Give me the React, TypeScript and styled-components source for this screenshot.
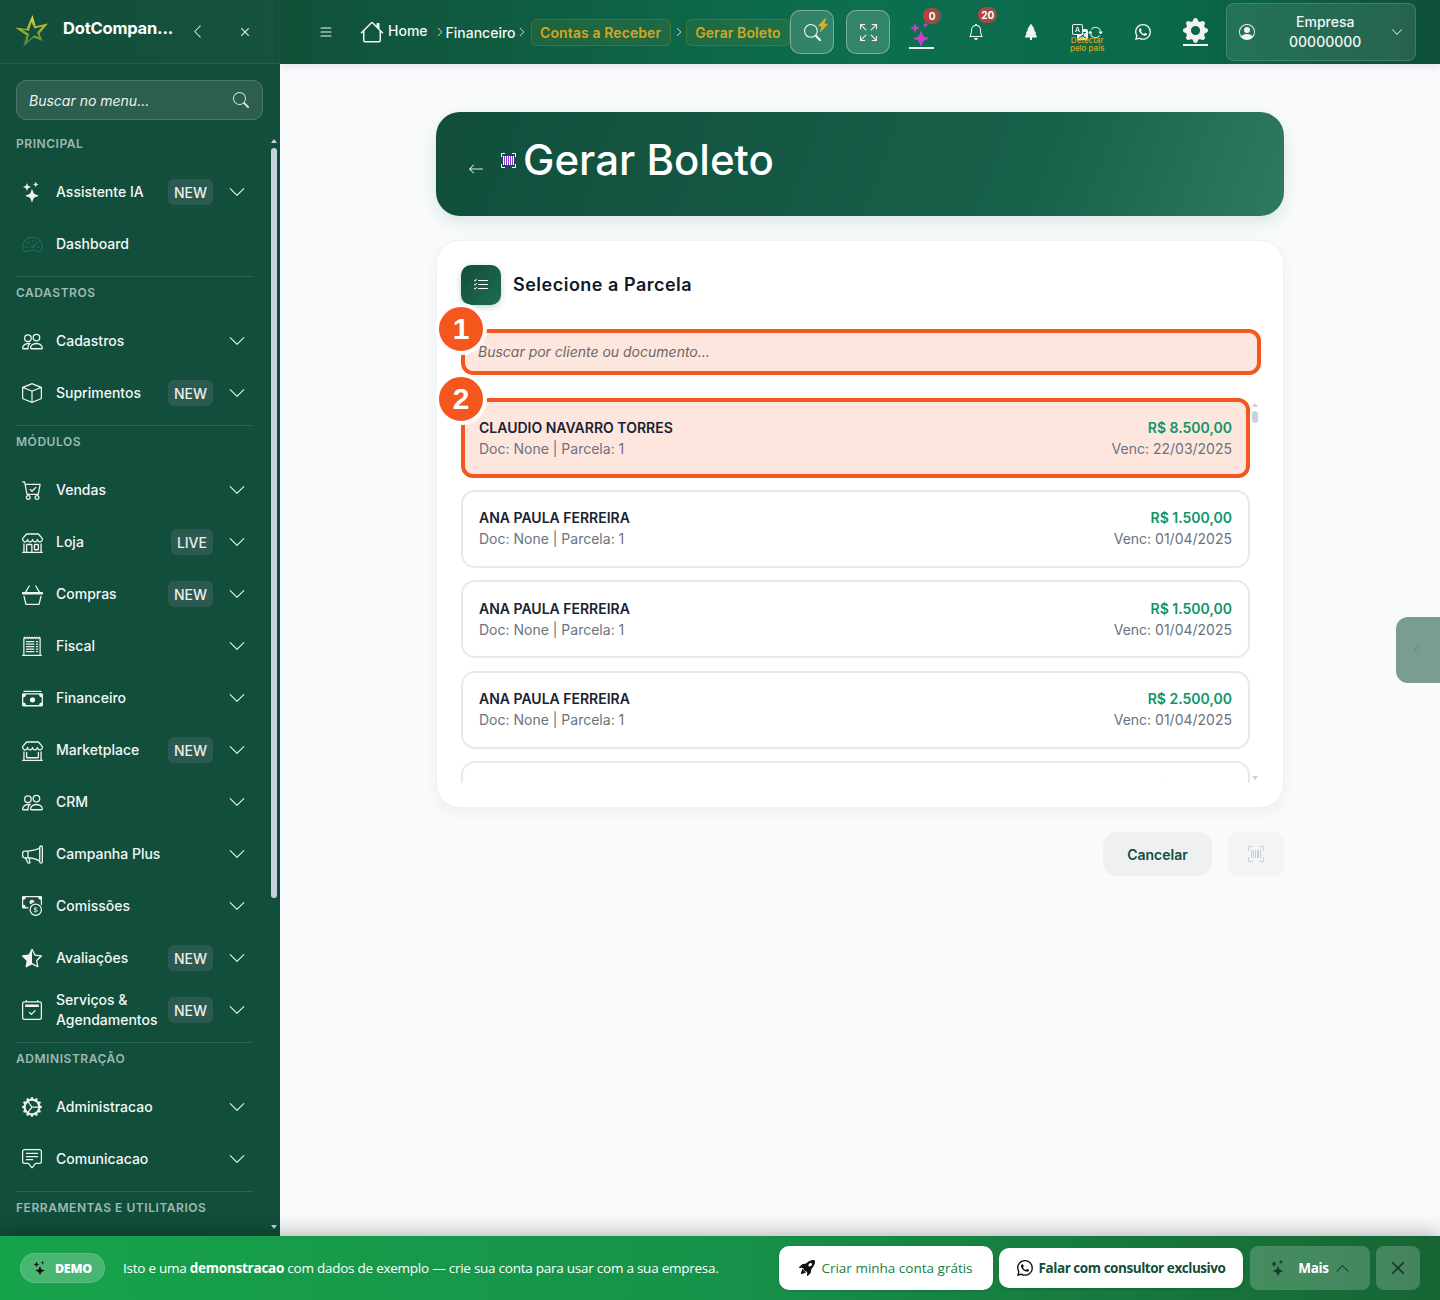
import React from "react";
import styled, { createGlobalStyle } from "styled-components";
import {
  BsArrowLeft,
  BsArrowRepeat,
  BsArrowsFullscreen,
  BsBasket3,
  BsBell,
  BsBox,
  BsCalendar2Check,
  BsCartCheck,
  BsCashCoin,
  BsCashStack,
  BsChatSquareText,
  BsChevronDown,
  BsChevronLeft,
  BsChevronRight,
  BsChevronUp,
  BsGearFill,
  BsGearWideConnected,
  BsHouse,
  BsLightningChargeFill,
  BsList,
  BsListCheck,
  BsMegaphone,
  BsPeople,
  BsPersonCircle,
  BsReceiptCutoff,
  BsRocketTakeoffFill,
  BsSearch,
  BsShop,
  BsShopWindow,
  BsSpeedometer2,
  BsStarHalf,
  BsStars,
  BsTranslate,
  BsTreeFill,
  BsUpcScan,
  BsWhatsapp,
  BsX,
} from "react-icons/bs";

const GlobalStyle = createGlobalStyle`
  html, body {
    margin: 0;
    padding: 0;
    background: #f8fafc;
  }
  body {
    font-family: "Inter", "Liberation Sans", sans-serif;
  }
  * {
    box-sizing: border-box;
  }
`;

const Page = styled.div`
  position: relative;
  width: 1440px;
  height: 1300px;
  display: grid;
  grid-template-rows: 1236px 64px;
  overflow: hidden;
`;

const Shell = styled.div`
  display: grid;
  grid-template-columns: 280px 1fr;
  min-height: 0;
`;

/* sidebar */

const Sidebar = styled.aside`
  position: relative;
  background: #114e3c;
  display: flex;
  flex-direction: column;
  min-height: 0;
  overflow: hidden;
`;

const Brand = styled.div`
  height: 64px;
  flex: none;
  display: flex;
  align-items: center;
  padding: 0 0 0 14px;
  border-bottom: 1px solid rgba(255, 255, 255, 0.08);
  border-right: 1px solid rgba(255, 255, 255, 0.06);
  background: linear-gradient(90deg, #114e3c, #15533d);
  color: #fff;
`;

const BrandName = styled.div`
  width: 116px;
  margin: -8px 0 0 13px;
  font-size: 16.5px;
  font-weight: 700;
  letter-spacing: -0.2px;
  white-space: nowrap;
`;

const BrandClose = styled.div`
  display: flex;
  align-items: center;
  margin-left: 11px;
  gap: 31px;
  color: #e4ece9;
`;

const MenuSearch = styled.div`
  height: 40px;
  margin: 16px 17px 0 16px;
  padding: 0 13px 0 12px;
  flex: none;
  display: flex;
  align-items: center;
  justify-content: space-between;
  background: #2d5f50;
  border: 1px solid #4a7769;
  border-radius: 10px;
  color: #eef3f1;
  font-size: 14px;
  font-style: italic;

  svg {
    color: #d4dfdc;
  }
`;

const Nav = styled.nav`
  padding: 14px 27px 0 16px;
  flex: 1;
  overflow: hidden;
`;

const Group = styled.section`
  & + & {
    margin-top: 6px;
    padding-top: 6px;
    border-top: 1px solid rgba(255, 255, 255, 0.12);
  }
`;

const GroupLabel = styled.div`
  height: 20px;
  margin-bottom: 12px;
  font-size: 12px;
  font-weight: 600;
  line-height: 20px;
  letter-spacing: 0.55px;
  color: #9fbab1;
`;

const Row = styled.div`
  height: 52px;
  display: flex;
  align-items: center;
  padding: 0 8px 0 5px;
  color: #f4f7f6;
`;

const RowIcon = styled.span<{ $dim?: boolean }>`
  width: 22px;
  height: 22px;
  flex: none;
  display: flex;
  align-items: center;
  justify-content: center;
  color: ${(p) => (p.$dim ? "#1d6a54" : "#eef3f1")};
`;

const RowText = styled.span`
  flex: 1;
  margin-left: 13px;
  font-size: 14px;
  font-weight: 500;
  line-height: 20px;
`;

const Badge = styled.span`
  height: 26px;
  margin-right: 15px;
  padding: 0 6px;
  display: flex;
  align-items: center;
  border-radius: 6px;
  background: #2d5a50;
  font-size: 14px;
  font-weight: 500;
  color: #e9efed;
`;

const RowChevron = styled.span`
  width: 18px;
  margin-right: -1px;
  display: flex;
  justify-content: center;
  color: #e8eeec;
`;

const Rail = styled.div`
  position: absolute;
  top: 139px;
  bottom: 0;
  right: 3px;
  width: 6px;
`;

const RailThumb = styled.div`
  margin-top: 9px;
  height: 750px;
  border-radius: 3px;
  background: #c5d2de;
`;

const RailArrow = styled.div<{ $down?: boolean }>`
  position: absolute;
  left: 0;
  ${(p) => (p.$down ? "bottom: 7px;" : "top: 0;")}
  width: 0;
  height: 0;
  border-left: 3px solid transparent;
  border-right: 3px solid transparent;
  ${(p) =>
    p.$down
      ? "border-top: 4px solid #c5d2de;"
      : "border-bottom: 4px solid #c5d2de;"}
`;

/* top bar */

const Content = styled.div`
  display: grid;
  grid-template-rows: 64px 1fr;
  min-height: 0;
`;

const TopBar = styled.header`
  position: relative;
  z-index: 1;
  display: flex;
  align-items: center;
  padding-left: 38px;
  background: linear-gradient(90deg, #115038 0%, #0c6f50 50%, #0a6a4b 75%, #0f5039 100%);
  box-shadow: 0 2px 8px rgba(15, 23, 42, 0.1);
  color: #f2f6f4;
`;

const Crumbs = styled.div`
  display: flex;
  align-items: center;
  margin-left: 26px;
  font-size: 14px;
  font-weight: 500;
  white-space: nowrap;
`;

const HomeText = styled.span`
  margin: -4px 6px 0 4px;
`;

const Sep = styled.span<{ $ml?: number; $mr?: number }>`
  display: flex;
  margin: 0 ${(p) => p.$mr ?? 1}px 0 ${(p) => p.$ml ?? 1}px;
  color: #dfe9e5;
`;

const CrumbPill = styled.span`
  height: 27px;
  padding: 0 8.5px;
  display: flex;
  align-items: center;
  border: 1px solid rgba(234, 179, 8, 0.18);
  border-radius: 6px;
  background: rgba(234, 179, 8, 0.07);
  color: #d9a51f;
  font-weight: 600;
  letter-spacing: 0.1px;
`;

const ToolButton = styled.button<{ $gap?: number }>`
  position: relative;
  width: 44px;
  height: 44px;
  margin-left: ${(p) => p.$gap ?? 0}px;
  padding: 0;
  display: flex;
  align-items: center;
  justify-content: center;
  border: 1px solid rgba(255, 255, 255, 0.35);
  border-radius: 10px;
  background: rgba(255, 255, 255, 0.16);
  color: #f2f6f4;
`;

const Bolt = styled.span`
  position: absolute;
  top: 7px;
  right: 3px;
  display: flex;
  color: #e8ad1d;
`;

const TopIcon = styled.div<{ $gap: number; $w?: number }>`
  position: relative;
  width: ${(p) => p.$w ?? 32}px;
  margin-left: ${(p) => p.$gap}px;
  display: flex;
  align-items: center;
  justify-content: center;
  color: #f0f5f3;
`;

const SparkStack = styled.div`
  display: flex;
  flex-direction: column;
  align-items: center;
  margin-top: 6px;
  color: #c93fc7;
`;

const Underline = styled.div`
  width: 25px;
  height: 2px;
  margin-top: 1px;
  background: #eef3f1;
`;

const GearStack = styled(SparkStack)`
  margin-top: 0;
  color: #eef3f1;
`;

const CountDot = styled.span<{ $top: number; $left: number }>`
  position: absolute;
  top: ${(p) => p.$top}px;
  left: ${(p) => p.$left}px;
  min-width: 18px;
  height: 16px;
  padding: 0 3px;
  display: flex;
  align-items: center;
  justify-content: center;
  border-radius: 9px;
  background: linear-gradient(90deg, #c93a3a, #7d5a4b);
  font-size: 10px;
  font-weight: 700;
  color: #fff;
`;

const Detect = styled.span`
  position: absolute;
  top: 12px;
  left: 0;
  width: 100%;
  text-align: center;
  font-size: 8px;
  line-height: 8px;
  font-weight: 500;
  color: #d9a51f;
`;

const Company = styled.div`
  width: 190px;
  height: 58px;
  margin-left: 15px;
  padding: 0 12px 0 12px;
  display: flex;
  align-items: center;
  border: 1px solid rgba(255, 255, 255, 0.14);
  border-radius: 8px;
  background: rgba(255, 255, 255, 0.1);
`;

const CompanyText = styled.div`
  flex: 1;
  padding-left: 4px;
  text-align: center;
  font-size: 14px;
  font-weight: 500;
  line-height: 20.5px;
`;

/* main */

const Main = styled.main`
  position: relative;
  min-height: 0;
  padding: 48px 156px 0;
  background: #f8fafc;
  overflow: hidden;
`;

const Hero = styled.div`
  height: 104px;
  padding: 0 32px;
  display: flex;
  align-items: center;
  border-radius: 24px;
  background: linear-gradient(110deg, #114e3c 0%, #17604a 70%, #2e7a60 100%);
  box-shadow: 0 6px 16px rgba(15, 80, 60, 0.12);
  color: #fff;
`;

const HeroBack = styled.span`
  display: flex;
  margin: 10px 16px 0 0;
  color: #e2eae7;
`;

const HeroMark = styled.span`
  display: flex;
  margin: 0 6px 8px 0;
`;

const HeroTitle = styled.h1`
  margin: 0 0 8px;
  font-family: "Inter", sans-serif;
  font-size: 42px;
  font-weight: 500;
  line-height: 48px;
  letter-spacing: 0;
`;

const Card = styled.section`
  height: 568px;
  margin-top: 24px;
  padding: 24px;
  background: #fff;
  border: 1px solid #eff2f6;
  border-radius: 24px;
  box-shadow: 0 4px 14px rgba(15, 23, 42, 0.05);
`;

const CardHead = styled.div`
  display: flex;
  align-items: center;
  gap: 12px;
  color: #111827;
`;

const CardIcon = styled.span`
  width: 40px;
  height: 40px;
  display: flex;
  align-items: center;
  justify-content: center;
  border-radius: 10px;
  background: linear-gradient(135deg, #114e3c, #1f6c52);
  box-shadow: 0 2px 6px rgba(15, 80, 60, 0.25);
  color: #fff;
`;

const CardTitle = styled.h2`
  margin: 0;
  font-size: 18px;
  font-weight: 600;
  line-height: 28px;
  letter-spacing: 0.5px;
`;

const SearchField = styled.div`
  position: relative;
  height: 38px;
  margin: 28px 4px 0 4px;
  padding-left: 13px;
  display: flex;
  align-items: center;
  width: 792px;
  font-size: 14px;
  font-style: italic;
  color: #6b6663;
`;

const Highlight = styled.div`
  position: absolute;
  inset: -4px;
  border: 4px solid #f4561d;
  border-radius: 12px;
  background: rgba(244, 86, 29, 0.15);
`;

const ItemHighlight = styled(Highlight)`
  inset: -3px -2px;
`;

const StepBadge = styled.div<{ $item?: boolean }>`
  position: absolute;
  z-index: 2;
  top: ${(p) => (p.$item ? -28.5 : -30)}px;
  left: ${(p) => (p.$item ? -28 : -30)}px;
  width: 52px;
  height: 52px;
  display: flex;
  align-items: center;
  justify-content: center;
  border: 4px solid #fff;
  border-radius: 50%;
  background: #f4561d;
  font-family: "Liberation Sans", sans-serif;
  font-size: 30px;
  font-style: normal;
  font-weight: 700;
  color: #fff;
`;

const ListWrap = styled.div`
  position: relative;
  height: 385px;
  margin-top: 27px;
`;

const List = styled.div`
  height: 100%;
  width: 789px;
  padding-top: 1.2px;
  clip-path: inset(-40px -40px 0 -40px);
  display: flex;
  flex-direction: column;
  gap: 12.5px;
`;

const ListRail = styled.div`
  position: absolute;
  top: 5px;
  right: 1px;
  bottom: -4px;
  width: 6px;
`;

const ListThumb = styled.div`
  margin-top: 8px;
  width: 6px;
  height: 12px;
  border-radius: 3px;
  background: #c5d2de;
`;

const Installment = styled.div<{ $active?: boolean }>`
  position: relative;
  flex: none;
  height: 78px;
  padding: 0 16px 0 16px;
  display: flex;
  align-items: center;
  justify-content: space-between;
  border: 2px solid ${(p) => (p.$active ? "transparent" : "#e5eaf1")};
  border-radius: 14px;
  background: #fff;
`;

const Cell = styled.div<{ $right?: boolean }>`
  position: relative;
  z-index: 1;
  display: flex;
  flex-direction: column;
  gap: 1px;
  text-align: ${(p) => (p.$right ? "right" : "left")};
  line-height: 20px;
`;

const Client = styled.div`
  font-size: 14px;
  font-weight: 600;
  color: #1b2230;
`;

const Amount = styled.div`
  font-size: 14px;
  font-weight: 600;
  color: #0d9668;
`;

const Meta = styled.div`
  font-size: 14px;
  color: #6b7280;
`;

const Footer = styled.div`
  margin-top: 24px;
  display: flex;
  justify-content: flex-end;
  gap: 16px;
`;

const CancelButton = styled.button`
  width: 109px;
  height: 44px;
  border: none;
  border-radius: 14px;
  background: #eef0f2;
  font-family: inherit;
  font-size: 14px;
  font-weight: 600;
  color: #114e3c;
`;

const ScanButton = styled.button`
  width: 56px;
  height: 44px;
  display: flex;
  align-items: center;
  justify-content: center;
  border: none;
  border-radius: 10px;
  background: #f3f4f6;
  color: #c9cdd2;
`;

const SideHandle = styled.div`
  position: absolute;
  top: 617px;
  right: 0;
  width: 44px;
  height: 66px;
  padding-left: 14px;
  display: flex;
  align-items: center;
  border-radius: 12px 0 0 12px;
  background: #7b9c91;
  color: #6a8a80;
`;

/* demo bar */

const DemoBar = styled.footer`
  position: relative;
  z-index: 2;
  display: flex;
  align-items: center;
  padding: 0 20px;
  background: linear-gradient(90deg, #16a34a 0%, #17924a 50%, #166534 100%);
  box-shadow: 0 -4px 18px rgba(0, 0, 0, 0.25);
  font-family: "Open Sans", "Liberation Sans", sans-serif;
  color: #fff;
`;

const DemoPill = styled.div`
  width: 85px;
  height: 30px;
  display: flex;
  align-items: center;
  gap: 8px;
  padding-left: 12px;
  border: 1px solid rgba(255, 255, 255, 0.12);
  border-radius: 15px;
  background: rgba(255, 255, 255, 0.22);
  font-size: 12.5px;
  font-weight: 800;
  letter-spacing: -0.3px;

  svg {
    color: #111;
  }
`;

const DemoText = styled.div`
  flex: 1;
  margin-left: 18px;
  font-size: 13.5px;
  font-weight: 500;
  letter-spacing: -0.25px;
  white-space: nowrap;

  b {
    font-weight: 700;
  }
`;

const DemoAction = styled.button<{ $bold?: boolean }>`
  height: ${(p) => (p.$bold ? 40 : 44)}px;
  width: ${(p) => (p.$bold ? 244 : 214)}px;
  margin-right: ${(p) => (p.$bold ? 7 : 6)}px;
  padding: 0;
  display: flex;
  align-items: center;
  justify-content: center;
  gap: 6px;
  border: none;
  border-radius: 10px;
  background: #fff;
  box-shadow: 0 1px 3px rgba(0, 0, 0, 0.15);
  font-family: inherit;
  font-size: 13.5px;
  letter-spacing: ${(p) => (p.$bold ? "-0.45px" : "0")};
  font-weight: ${(p) => (p.$bold ? 700 : 500)};
  color: ${(p) => (p.$bold ? "#114e3c" : "#15803d")};

  svg {
    color: #111;
  }
`;

const GhostAction = styled.button<{ $square?: boolean }>`
  width: ${(p) => (p.$square ? 44 : 120)}px;
  height: 44px;
  margin-left: ${(p) => (p.$square ? 6 : 0)}px;
  padding: 0;
  display: flex;
  align-items: center;
  justify-content: center;
  gap: 6px;
  border: none;
  border-radius: 8px;
  background: rgba(255, 255, 255, 0.2);
  font-family: inherit;
  font-size: 13.5px;
  font-weight: 700;
  letter-spacing: -0.3px;
  color: #fff;

  svg {
    color: #1b3a2c;
  }
`;

const MoreLabel = styled.span`
  margin-left: 6px;
`;

type MenuItem = {
  label: React.ReactNode;
  icon: React.ReactNode;
  badge?: string;
  chevron?: boolean;
  dim?: boolean;
};

type MenuGroup = { title: string; items: MenuItem[] };

const menu: MenuGroup[] = [
  {
    title: "PRINCIPAL",
    items: [
      { label: "Assistente IA", icon: <BsStars size={20} />, badge: "NEW", chevron: true },
      { label: "Dashboard", icon: <BsSpeedometer2 size={21} />, dim: true },
    ],
  },
  {
    title: "CADASTROS",
    items: [
      { label: "Cadastros", icon: <BsPeople size={21} />, chevron: true },
      { label: "Suprimentos", icon: <BsBox size={20} />, badge: "NEW", chevron: true },
    ],
  },
  {
    title: "MÓDULOS",
    items: [
      { label: "Vendas", icon: <BsCartCheck size={20} />, chevron: true },
      { label: "Loja", icon: <BsShop size={21} />, badge: "LIVE", chevron: true },
      { label: "Compras", icon: <BsBasket3 size={21} />, badge: "NEW", chevron: true },
      { label: "Fiscal", icon: <BsReceiptCutoff size={20} />, chevron: true },
      { label: "Financeiro", icon: <BsCashStack size={21} />, chevron: true },
      { label: "Marketplace", icon: <BsShopWindow size={21} />, badge: "NEW", chevron: true },
      { label: "CRM", icon: <BsPeople size={21} />, chevron: true },
      { label: "Campanha Plus", icon: <BsMegaphone size={21} />, chevron: true },
      { label: "Comissões", icon: <BsCashCoin size={20} />, chevron: true },
      { label: "Avaliações", icon: <BsStarHalf size={20} />, badge: "NEW", chevron: true },
      {
        label: (
          <>
            Serviços &<br />
            Agendamentos
          </>
        ),
        icon: <BsCalendar2Check size={20} />,
        badge: "NEW",
        chevron: true,
      },
    ],
  },
  {
    title: "ADMINISTRAÇÃO",
    items: [
      { label: "Administracao", icon: <BsGearWideConnected size={20} />, chevron: true },
      { label: "Comunicacao", icon: <BsChatSquareText size={20} />, chevron: true },
    ],
  },
  { title: "FERRAMENTAS E UTILITARIOS", items: [] },
];

const installments = [
  { client: "ANA PAULA FERREIRA", amount: "R$ 1.500,00", due: "01/04/2025" },
  { client: "ANA PAULA FERREIRA", amount: "R$ 1.500,00", due: "01/04/2025" },
  { client: "ANA PAULA FERREIRA", amount: "R$ 2.500,00", due: "01/04/2025" },
  { client: "ANA PAULA FERREIRA", amount: "R$ 1.000,00", due: "01/04/2025" },
];

const StarLogo = () => (
  <svg width="36" height="36" viewBox="0 0 36 36" fill="none">
    <defs>
      <linearGradient id="starGold" x1="0" y1="0" x2="0" y2="1">
        <stop offset="0" stopColor="#e6dc3a" />
        <stop offset="1" stopColor="#4d7a2c" />
      </linearGradient>
    </defs>
    <path
      d="M18.5 1 L21.8 12.2 L34 9.5 L25.5 19.5 L28.5 27 L19.5 23.5 L9 33 L12.5 21.5 L1 13.5 L12.5 15 Z M17.5 8 L15 17 L8 15.5 L15 20 L13.5 27.5 L20 21.5 L25 23 L23 18.5 L28.5 12.5 L20.5 14.5 Z"
      fill="url(#starGold)"
      fillRule="evenodd"
    />
  </svg>
);

const ColorBarcode = () => (
  <svg width="17" height="17" viewBox="0 0 17 17" fill="none">
    <path d="M1.5 5V1.5H5M12 1.5H15.5V5M15.5 12V15.5H12M5 15.5H1.5V12" stroke="#fff" />
    <rect x="3" y="4" width="11" height="9" fill="#fff" />
    <path d="M4 4h1v9H4zM6 4h1v9H6zM8 4h1v9H8zM10 4h1v9h-1zM12 4h1v9h-1z" fill="#8e3fd0" />
  </svg>
);

const App = () => {
  return (
    <Page>
      <GlobalStyle />
      <Shell>
        <Sidebar>
          <Brand>
            <StarLogo />
            <BrandName>DotCompan...</BrandName>
            <BrandClose>
              <BsChevronLeft size={15} />
              <BsX size={18} />
            </BrandClose>
          </Brand>
          <MenuSearch>
            Buscar no menu...
            <BsSearch size={16} />
          </MenuSearch>
          <Nav>
            {menu.map((group) => (
              <Group key={group.title}>
                <GroupLabel>{group.title}</GroupLabel>
                {group.items.map((item, i) => (
                  <Row key={i}>
                    <RowIcon $dim={item.dim}>{item.icon}</RowIcon>
                    <RowText>{item.label}</RowText>
                    {item.badge && <Badge>{item.badge}</Badge>}
                    {item.chevron && (
                      <RowChevron>
                        <BsChevronDown size={18} />
                      </RowChevron>
                    )}
                  </Row>
                ))}
              </Group>
            ))}
          </Nav>
          <Rail>
            <RailArrow />
            <RailThumb />
            <RailArrow $down />
          </Rail>
        </Sidebar>

        <Content>
          <TopBar>
            <BsList size={16} />
            <Crumbs>
              <BsHouse size={24} />
              <HomeText>Home</HomeText>
              <Sep>
                <BsChevronRight size={10} />
              </Sep>
              Financeiro
              <Sep $mr={4}>
                <BsChevronRight size={10} />
              </Sep>
              <CrumbPill>Contas a Receber</CrumbPill>
              <Sep $ml={3} $mr={2}>
                <BsChevronRight size={10} />
              </Sep>
              <CrumbPill>Gerar Boleto</CrumbPill>
            </Crumbs>
            <ToolButton>
              <BsSearch size={17} />
              <Bolt>
                <BsLightningChargeFill size={14} />
              </Bolt>
            </ToolButton>
            <ToolButton $gap={12}>
              <BsArrowsFullscreen size={17} />
            </ToolButton>
            <TopIcon $gap={15}>
              <SparkStack>
                <BsStars size={24} />
                <Underline />
              </SparkStack>
              <CountDot $top={-8} $left={18}>
                0
              </CountDot>
            </TopIcon>
            <TopIcon $gap={23}>
              <BsBell size={16} />
              <CountDot $top={-17} $left={18}>
                20
              </CountDot>
            </TopIcon>
            <TopIcon $gap={23}>
              <BsTreeFill size={16} />
            </TopIcon>
            <TopIcon $gap={22} $w={36}>
              <BsTranslate size={16} />
              <BsArrowRepeat size={15} />
              <Detect>
                Detectar
                <br />
                pelo país
              </Detect>
            </TopIcon>
            <TopIcon $gap={22}>
              <BsWhatsapp size={16} />
            </TopIcon>
            <TopIcon $gap={20}>
              <GearStack>
                <BsGearFill size={25} />
                <Underline />
              </GearStack>
            </TopIcon>
            <Company>
              <BsPersonCircle size={16} />
              <CompanyText>
                Empresa
                <br />
                00000000
              </CompanyText>
              <BsChevronDown size={12} />
            </Company>
          </TopBar>

          <Main>
            <Hero>
              <HeroBack>
                <BsArrowLeft size={16} />
              </HeroBack>
              <HeroMark>
                <ColorBarcode />
              </HeroMark>
              <HeroTitle>Gerar Boleto</HeroTitle>
            </Hero>

            <Card>
              <CardHead>
                <CardIcon>
                  <BsListCheck size={16} />
                </CardIcon>
                <CardTitle>Selecione a Parcela</CardTitle>
              </CardHead>

              <SearchField>
                <Highlight />
                <StepBadge>1</StepBadge>
                <Cell>Buscar por cliente ou documento...</Cell>
              </SearchField>

              <ListWrap>
                <List>
                  <Installment $active>
                    <ItemHighlight />
                    <StepBadge $item>2</StepBadge>
                    <Cell>
                      <Client>CLAUDIO NAVARRO TORRES</Client>
                      <Meta>Doc: None | Parcela: 1</Meta>
                    </Cell>
                    <Cell $right>
                      <Amount>R$ 8.500,00</Amount>
                      <Meta>Venc: 22/03/2025</Meta>
                    </Cell>
                  </Installment>
                  {installments.map((item, i) => (
                    <Installment key={i}>
                      <Cell>
                        <Client>{item.client}</Client>
                        <Meta>Doc: None | Parcela: 1</Meta>
                      </Cell>
                      <Cell $right>
                        <Amount>{item.amount}</Amount>
                        <Meta>Venc: {item.due}</Meta>
                      </Cell>
                    </Installment>
                  ))}
                </List>
                <ListRail>
                  <RailArrow />
                  <ListThumb />
                  <RailArrow $down />
                </ListRail>
              </ListWrap>
            </Card>

            <Footer>
              <CancelButton>Cancelar</CancelButton>
              <ScanButton>
                <BsUpcScan size={16} />
              </ScanButton>
            </Footer>
          </Main>
        </Content>
      </Shell>

      <DemoBar>
        <DemoPill>
          <BsStars size={14} />
          DEMO
        </DemoPill>
        <DemoText>
          Isto e uma <b>demonstracao</b> com dados de exemplo — crie sua conta para usar com a sua
          empresa.
        </DemoText>
        <DemoAction>
          <BsRocketTakeoffFill size={16} />
          Criar minha conta grátis
        </DemoAction>
        <DemoAction $bold>
          <BsWhatsapp size={16} />
          Falar com consultor exclusivo
        </DemoAction>
        <GhostAction>
          <BsStars size={16} />
          <MoreLabel>Mais</MoreLabel>
          <BsChevronUp size={15} />
        </GhostAction>
        <GhostAction $square>
          <BsX size={28} />
        </GhostAction>
      </DemoBar>

      <SideHandle>
        <BsChevronLeft size={14} />
      </SideHandle>
    </Page>
  );
};

export default App;
